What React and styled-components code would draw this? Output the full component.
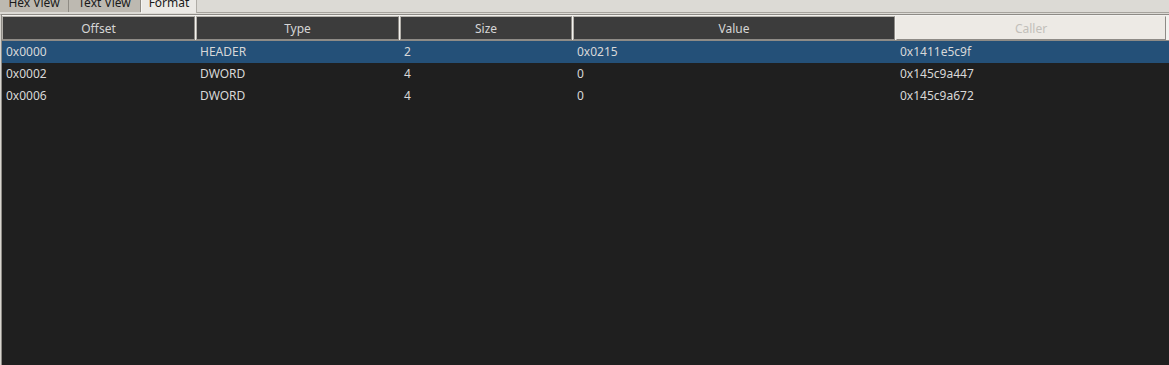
import React from 'react'
import styled, { createGlobalStyle } from 'styled-components'

const GlobalStyle = createGlobalStyle`
  html, body {
    margin: 0;
    padding: 0;
    background: #dcdad5;
    overflow: hidden;
  }
  body {
    font-family: "Segoe UI", "Noto Sans", "Liberation Sans", sans-serif;
    font-size: 12px;
  }
`

const columns = [
  { key: 'offset', title: 'Offset', width: 194 },
  { key: 'type', title: 'Type', width: 204 },
  { key: 'size', title: 'Size', width: 173 },
  { key: 'value', title: 'Value', width: 323 },
  { key: 'caller', title: 'Caller', width: 271, disabled: true },
]

const rows = [
  { offset: '0x0000', type: 'HEADER', size: '2', value: '0x0215', caller: '0x1411e5c9f' },
  { offset: '0x0002', type: 'DWORD', size: '4', value: '0', caller: '0x145c9a447' },
  { offset: '0x0006', type: 'DWORD', size: '4', value: '0', caller: '0x145c9a672' },
]

const gridTemplate = columns.map((c) => `${c.width}px`).join(' ')

const App = () => {
  return (
    <Page>
      <GlobalStyle />
      <TabBar>
        <Tab $width={69}>Hex View</Tab>
        <Tab $width={72}>Text View</Tab>
        <Tab $width={56} $active>Format</Tab>
        <TabFill />
      </TabBar>
      <Panel>
        <HeaderRow>
          {columns.map((c) => (
            <HeaderCell key={c.key} $disabled={c.disabled}>
              {c.title}
            </HeaderCell>
          ))}
        </HeaderRow>
        <Body>
          {rows.map((row, i) => (
            <Row key={i} $selected={i === 0}>
              {columns.map((c) => (
                <Cell key={c.key}>{row[c.key]}</Cell>
              ))}
            </Row>
          ))}
        </Body>
      </Panel>
    </Page>
  )
}

export default App

const Page = styled.div`
  height: 365px;
  display: flex;
  flex-direction: column;
  background: #dcdad5;
`

const TabBar = styled.div`
  display: flex;
  height: 13px;
  overflow: hidden;
  align-items: flex-end;
  flex-shrink: 0;
`

const Tab = styled.div`
  width: ${({ $width }) => $width}px;
  height: ${({ $active }) => ($active ? 19 : 18)}px;
  margin-bottom: ${({ $active }) => ($active ? 0 : 1)}px;
  box-sizing: border-box;
  display: flex;
  align-items: center;
  justify-content: center;
  padding-bottom: 1px;
  line-height: 12px;
  color: #1a1a1a;
  font-size: 12px;
  background: ${({ $active }) => ($active ? '#ebe9e5' : '#bdb9b1')};
  border-right: 1px solid ${({ $active }) => ($active ? '#b0ada7' : '#8f8b84')};
  ${({ $active }) => $active && 'border-left: 1px solid #f6f5f2;'}
`

const TabFill = styled.div`
  flex: 1;
  align-self: stretch;
  border-bottom: 1px solid #a6a39d;
`

const Panel = styled.div`
  flex: 1;
  display: flex;
  flex-direction: column;
  margin-top: 1px;
  border-top: 1px solid #8e8b86;
  border-left: 1px solid #d8d5cf;
  box-shadow: inset 1px 0 0 #8e8b86;
  padding-left: 1px;
  background: #1f1f1f;
  min-height: 0;
`

const HeaderRow = styled.div`
  display: grid;
  grid-template-columns: ${gridTemplate};
  height: 26px;
  background: #f3f2ef;
  border-bottom: 1px solid #8e8b86;
  box-sizing: border-box;
`

const HeaderCell = styled.div`
  display: flex;
  align-items: center;
  justify-content: center;
  box-sizing: border-box;
  margin: 1px 1px 0 0;
  color: ${({ $disabled }) => ($disabled ? '#c2bfba' : '#d6d6d6')};
  background: ${({ $disabled }) => ($disabled ? '#edeae5' : '#3c3c3c')};
  border: 1px solid ${({ $disabled }) => ($disabled ? '#edeae5' : '#b3b0aa')};
  border-right-color: #8e8b86;
  border-bottom-color: #8e8b86;
  white-space: nowrap;
`

const Body = styled.div`
  flex: 1;
  background: #1f1f1f;
`

const Row = styled.div`
  display: grid;
  grid-template-columns: ${gridTemplate};
  height: 22px;
  align-items: center;
  background: ${({ $selected }) => ($selected ? '#245078' : 'transparent')};
`

const Cell = styled.div`
  padding-left: 4px;
  padding-bottom: 2px;
  color: #d8d8d8;
  white-space: nowrap;
  overflow: hidden;
`
